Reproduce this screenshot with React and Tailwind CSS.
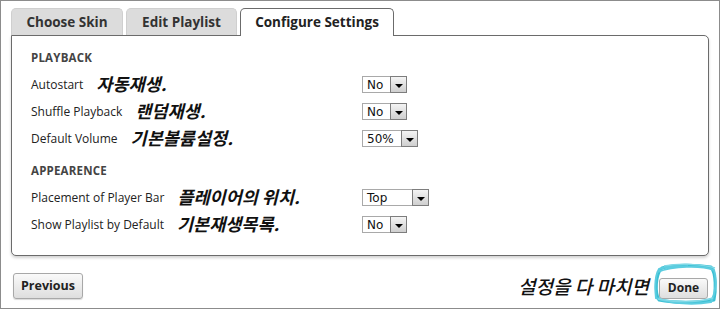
import React from 'react';

const ui = { fontFamily: '"Open Sans", "Noto Sans", sans-serif' };
const note = { fontFamily: '"Noto Sans CJK KR", "Noto Sans", sans-serif' };

const Select = ({ value, width }) => (
  <div className={`flex h-[17px] items-center border border-[#a9a9a9] bg-white ${width}`}>
    <span className="flex-1 pl-[4px] text-[12px] leading-none text-[#111]" style={{ fontFamily: '"DejaVu Sans", sans-serif' }}>
      {value}
    </span>
    <span className="mr-[-1px] flex h-[17px] w-[17px] items-center justify-center border border-[#7d7d7d] bg-gradient-to-b from-[#f4f4f4] to-[#cfcfcf]">
      <span className="mt-[2px] h-0 w-0 border-x-[4px] border-t-[4px] border-x-transparent border-t-black" />
    </span>
  </div>
);

const Row = ({ label, hint, children }) => (
  <div className="flex h-[27px] items-center">
    <div className="flex w-[331px] items-center">
      <span className="text-[12px] text-[#222]">{label}</span>
      <span className="ml-[13px] text-[17.5px] font-bold italic text-[#111]" style={note}>
        {hint}
      </span>
    </div>
    {children}
  </div>
);

const Section = ({ title }) => (
  <div className="flex h-[27px] items-center text-[11.5px] font-bold tracking-[0.2px] text-[#444]">{title}</div>
);

const Tab = ({ label, active }) => (
  <div
    className={
      active
        ? 'relative z-10 -mb-px flex h-[28px] w-[154px] items-center justify-center rounded-t-[5px] border border-b-0 border-[#6b6b6b] bg-white text-[13.5px] font-bold text-[#222]'
        : 'flex h-[27px] items-center justify-center rounded-t-[5px] border border-b-0 border-[#cfcfcf] bg-[#dcdcdc] text-[13.5px] font-bold text-[#333]'
    }
  >
    {label}
  </div>
);

export default function App() {
  return (
    <div className="flex h-[309px] w-[720px] flex-col border border-[#8c8c8c] bg-white px-[10px] pt-[7px]" style={ui}>
      <div className="flex items-end gap-[3px]">
        <div className="w-[112px]">
          <Tab label="Choose Skin" />
        </div>
        <div className="w-[111px]">
          <Tab label="Edit Playlist" />
        </div>
        <Tab label="Configure Settings" active />
      </div>

      <div className="h-[221px] rounded-b-[5px] rounded-tr-[5px] border border-[#6b6b6b] bg-white pl-[19px] pt-[8px] shadow-[0_2px_3px_rgba(0,0,0,0.18)]">
        <Section title="PLAYBACK" />
        <Row label="Autostart" hint="자동재생.">
          <Select value="No" width="w-[45px]" />
        </Row>
        <Row label="Shuffle Playback" hint="랜덤재생.">
          <Select value="No" width="w-[45px]" />
        </Row>
        <Row label="Default Volume" hint="기본볼륨설정.">
          <Select value="50%" width="w-[56px]" />
        </Row>
        <div className="mt-[5px]">
          <Section title="APPEARENCE" />
        </div>
        <Row label="Placement of Player Bar" hint="플레이어의 위치.">
          <Select value="Top" width="w-[67px]" />
        </Row>
        <Row label="Show Playlist by Default" hint="기본재생목록.">
          <Select value="No" width="w-[45px]" />
        </Row>
      </div>

      <div className="mt-[16px] flex items-center justify-between pl-[2px] pr-[1px]">
        <button className="h-[26px] w-[70px] rounded-[3px] border border-[#a8a8a8] bg-gradient-to-b from-[#fafafa] to-[#dedede] text-[12.5px] font-bold text-[#222] shadow-[0_1px_1px_rgba(0,0,0,0.15)]">
          Previous
        </button>
        <div className="flex items-center">
          <span className="mr-[10px] text-[19px] font-medium italic text-[#111]" style={note}>
            설정을 다 마치면
          </span>
          <div className="relative">
            <button className="h-[21px] w-[49px] rounded-[3px] border border-[#a8a8a8] bg-gradient-to-b from-[#fafafa] to-[#dedede] text-[12px] font-bold text-[#222]">
              Done
            </button>
            <svg className="pointer-events-none absolute left-[-5px] top-[-11px]" width="64" height="42" viewBox="0 0 64 42">
              <path
                d="M8 5 C22 1 44 2 57 4 C62 10 62 28 60 37 C44 40 20 40 5 37 C1 30 1 12 8 5 Z"
                fill="none"
                stroke="#3cc0d4"
                strokeWidth="3"
                strokeLinejoin="round"
              />
              <path
                d="M3 9 C20 3 46 2 60 7 C63 16 62 29 57 39 C40 42 18 41 2 35 C1 26 0 14 5 6 C14 3 26 4 34 3"
                fill="none"
                stroke="#5ccde0"
                strokeWidth="2"
              />
              <path
                d="M10 3 C26 0 48 1 61 5 M4 36 C20 39 42 40 59 35"
                fill="none"
                stroke="#7fd8e6"
                strokeWidth="1.5"
              />
            </svg>
          </div>
        </div>
      </div>
    </div>
  );
}
